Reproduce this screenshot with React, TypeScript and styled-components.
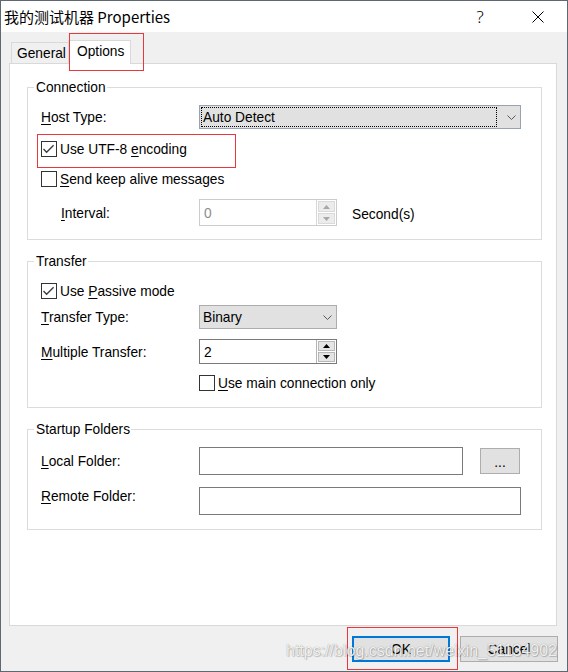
import React from "react";
import styled, { createGlobalStyle } from "styled-components";

const Global = createGlobalStyle`
  html, body { margin: 0; padding: 0; background: #2b3a48; }
  * { box-sizing: border-box; }
`;

const Window = styled.div`
  position: relative;
  width: 568px;
  height: 672px;
  border: 1px solid #5e6873;
  display: flex;
  flex-direction: column;
  background: #f0f0f0;
  font-family: "Liberation Sans", Arial, sans-serif;
  font-size: 13.75px;
  color: #000;
  overflow: hidden;
`;

const TitleBar = styled.div`
  height: 31px;
  flex: none;
  background: #fff;
  display: flex;
  align-items: center;
`;

const Title = styled.div`
  flex: 1;
  padding-left: 3px;
  font-family: "Noto Sans CJK SC", "Noto Sans", sans-serif;
  font-size: 15px;
  line-height: 31px;
  white-space: nowrap;
`;

const CaptionButton = styled.div`
  width: 58px;
  height: 31px;
  display: flex;
  align-items: center;
  justify-content: center;
  font-family: "Noto Sans", sans-serif;
  font-size: 17px;
  font-weight: 300;
`;

const Content = styled.div`
  padding: 8px 10px 0 8px;
  display: flex;
  flex-direction: column;
`;

const TabStrip = styled.div`
  height: 23px;
  display: flex;
  align-items: flex-end;
  padding-left: 2px;
`;

const Tab = styled.div<{ $active?: boolean; $w: number; $pl: number }>`
  width: ${(p) => p.$w}px;
  height: ${(p) => (p.$active ? 24 : 21)}px;
  padding: 3px 0 0 ${(p) => p.$pl}px;
  line-height: 16px;
  border: 1px solid #d9d9d9;
  border-bottom: none;
  background: ${(p) => (p.$active ? "#fff" : "#f0f0f0")};
  white-space: nowrap;
`;

const Annotated = styled.div<{
  $t: number;
  $l: number;
  $w: number;
  $h: number;
  $mt?: number;
  $ml?: number;
  $mb?: number;
}>`
  position: relative;
  z-index: 2;
  margin: ${(p) => `${p.$mt ?? 0}px 0 ${p.$mb ?? 0}px ${p.$ml ?? 0}px`};
  &::after {
    content: "";
    position: absolute;
    top: ${(p) => p.$t}px;
    left: ${(p) => p.$l}px;
    width: ${(p) => p.$w}px;
    height: ${(p) => p.$h}px;
    border: 1px solid #e8383d;
    pointer-events: none;
    z-index: 5;
  }
`;

const Panel = styled.div`
  height: 563px;
  border: 1px solid #d9d9d9;
  background: #fff;
  padding: 15px 14px 0 17px;
  display: flex;
  flex-direction: column;
`;

const Group = styled.fieldset<{ $pb: number }>`
  margin: 0 0 13px;
  padding: 0 0 ${(p) => p.$pb}px 13px;
  border: 1px solid #dcdcdc;
  min-width: 0;
  display: flex;
  flex-direction: column;
`;

const Legend = styled.legend`
  padding: 0 1px 0 2px;
  margin-left: -7px;
  line-height: 17px;
`;

const FormRow = styled.div<{ $mt: number; $h: number }>`
  display: flex;
  align-items: center;
  height: ${(p) => p.$h}px;
  margin-top: ${(p) => p.$mt}px;
`;

const Label = styled.span<{ $indent?: number; $top?: boolean }>`
  width: 158px;
  flex: none;
  padding: 2px 0 0 ${(p) => p.$indent ?? 0}px;
  line-height: 16px;
  white-space: nowrap;
  align-self: ${(p) => (p.$top ? "flex-start" : "auto")};
`;

const Key = styled.u`
  text-decoration-thickness: 1px;
  text-underline-offset: 2px;
`;

const CheckRow = styled.label<{ $mt?: number; $indent?: number }>`
  display: flex;
  align-items: center;
  height: 16px;
  margin-top: ${(p) => p.$mt ?? 0}px;
  margin-left: ${(p) => p.$indent ?? 0}px;
  white-space: nowrap;
`;

const CheckText = styled.span`
  line-height: 16px;
  padding-top: 2px;
`;

const Box = styled.span`
  width: 16px;
  height: 16px;
  flex: none;
  border: 1px solid #333;
  background: #fff;
  display: flex;
  align-items: center;
  justify-content: center;
  margin-right: 3px;
`;

const Combo = styled.div<{ $w: number; $focused?: boolean }>`
  width: ${(p) => p.$w}px;
  height: 24px;
  display: flex;
  background: #e1e1e1;
  border: 1px solid ${(p) => (p.$focused ? "#96a3b3" : "#adadad")};
`;

const ComboValue = styled.div<{ $focused?: boolean }>`
  flex: 1;
  margin: 1px 0 1px 1px;
  border: 1px dotted ${(p) => (p.$focused ? "#000" : "transparent")};
  padding: 2px 0 0 1px;
  display: flex;
  align-items: center;
  line-height: 16px;
`;

const ChevronArea = styled.div`
  width: 23px;
  flex: none;
  display: flex;
  align-items: center;
  justify-content: flex-end;
  padding-right: 4px;
`;

const SpinBox = styled.div<{ $w: number; $h: number; $disabled?: boolean }>`
  width: ${(p) => p.$w}px;
  height: ${(p) => p.$h}px;
  display: flex;
  background: #fff;
  border: 1px solid ${(p) => (p.$disabled ? "#cccccc" : "#7a7a7a")};
`;

const SpinText = styled.div<{ $disabled?: boolean }>`
  flex: 1;
  padding: 2px 0 0 4px;
  display: flex;
  align-items: center;
  line-height: 16px;
  color: ${(p) => (p.$disabled ? "#8d8d8d" : "#000")};
`;

const SpinButtons = styled.div<{ $disabled?: boolean }>`
  width: 20px;
  flex: none;
  display: flex;
  flex-direction: column;
  gap: 1px;
  padding: 1px 0;
  border-left: 1px solid ${(p) => (p.$disabled ? "#d8d8d8" : "#b5b5b5")};
`;

const SpinButton = styled.div<{ $disabled?: boolean }>`
  flex: 1;
  margin: 0 1px;
  background: ${(p) => (p.$disabled ? "#ececec" : "#e5e5e5")};
  border: 1px solid ${(p) => (p.$disabled ? "#dadada" : "#b8b8b8")};
  display: flex;
  align-items: center;
  justify-content: center;
`;

const Unit = styled.span`
  margin-left: 15px;
  padding-top: 4px;
  line-height: 16px;
`;

const TextBox = styled.div<{ $w: number }>`
  width: ${(p) => p.$w}px;
  height: 28px;
  border: 1px solid #7a7a7a;
  background: #fff;
`;

const SmallButton = styled.div`
  width: 40px;
  height: 26px;
  margin-left: 17px;
  background: #e1e1e1;
  border: 1px solid #adadad;
  display: flex;
  align-items: center;
  justify-content: center;
  padding-top: 3px;
  line-height: 16px;
`;

const Footer = styled.div`
  display: flex;
  justify-content: flex-end;
  gap: 10px;
  padding: 10px 9px 0 0;
`;

const DialogButton = styled.div<{ $default?: boolean }>`
  width: 98px;
  height: 26px;
  background: #e1e1e1;
  border: ${(p) => (p.$default ? "2px solid #0078d7" : "1px solid #adadad")};
  display: flex;
  align-items: center;
  justify-content: center;
  padding-top: 2px;
  line-height: 16px;
`;

const Watermark = styled.div`
  position: absolute;
  left: 285px;
  top: 641px;
  font-family: "Liberation Sans", Arial, sans-serif;
  font-size: 16px;
  line-height: 18px;
  color: rgba(255, 255, 255, 0.88);
  text-shadow: 0 0 1px rgba(60, 60, 60, 0.55), 1px 1px 1px rgba(0, 0, 0, 0.18);
  white-space: nowrap;
  pointer-events: none;
  z-index: 10;
`;

const Check = () => (
  <svg width="14" height="14" viewBox="0 0 14 14">
    <polyline points="1.5,7 4.6,10.2 11.6,3.2" fill="none" stroke="#3a3a3a" strokeWidth="1.3" />
  </svg>
);

const Chevron = () => (
  <svg width="9" height="5" viewBox="0 0 9 5">
    <polyline points="0.5,0.5 4.5,4.5 8.5,0.5" fill="none" stroke="#5a5a5a" strokeWidth="1" />
  </svg>
);

const Arrow = ({ up, disabled }: { up?: boolean; disabled?: boolean }) => (
  <svg width="7" height="4" viewBox="0 0 7 4">
    <polygon points={up ? "0,4 7,4 3.5,0" : "0,0 7,0 3.5,4"} fill={disabled ? "#a8a8a8" : "#000"} />
  </svg>
);

const CloseIcon = () => (
  <svg width="12" height="12" viewBox="0 0 12 12">
    <path d="M0.5 0.5 L11.5 11.5 M11.5 0.5 L0.5 11.5" stroke="#000" strokeWidth="1" />
  </svg>
);

const CheckBox = ({ checked }: { checked?: boolean }) => <Box>{checked && <Check />}</Box>;

const Spin = ({ value, w, h, disabled }: { value: string; w: number; h: number; disabled?: boolean }) => (
  <SpinBox $w={w} $h={h} $disabled={disabled}>
    <SpinText $disabled={disabled}>{value}</SpinText>
    <SpinButtons $disabled={disabled}>
      <SpinButton $disabled={disabled}>
        <Arrow up disabled={disabled} />
      </SpinButton>
      <SpinButton $disabled={disabled}>
        <Arrow disabled={disabled} />
      </SpinButton>
    </SpinButtons>
  </SpinBox>
);

export default function App() {
  return (
    <>
      <Global />
      <Window>
        <TitleBar>
          <Title>我的测试机器 Properties</Title>
          <CaptionButton>?</CaptionButton>
          <CaptionButton>
            <CloseIcon />
          </CaptionButton>
        </TitleBar>
        <Content>
          <TabStrip>
            <Tab $w={58} $pl={5}>General</Tab>
            <Annotated $t={-7} $l={1} $w={73} $h={36} $ml={-1} $mb={-1}>
              <Tab $active $w={63} $pl={8}>Options</Tab>
            </Annotated>
          </TabStrip>
          <Panel>
            <Group $pb={13}>
              <Legend>Connection</Legend>
              <FormRow $mt={9} $h={24}>
                <Label>
                  <Key>H</Key>ost Type:
                </Label>
                <Combo $w={322} $focused>
                  <ComboValue $focused>Auto Detect</ComboValue>
                  <ChevronArea>
                    <Chevron />
                  </ChevronArea>
                </Combo>
              </FormRow>
              <Annotated $t={-7} $l={-4} $w={197} $h={32} $mt={12}>
                <CheckRow>
                  <CheckBox checked />
                  <CheckText>
                    Use UTF-8 <Key>e</Key>ncoding
                  </CheckText>
                </CheckRow>
              </Annotated>
              <CheckRow $mt={14}>
                <CheckBox />
                <CheckText>
                  <Key>S</Key>end keep alive messages
                </CheckText>
              </CheckRow>
              <FormRow $mt={12} $h={27}>
                <Label $indent={20}>
                  <Key>I</Key>nterval:
                </Label>
                <Spin value="0" w={138} h={27} disabled />
                <Unit>Second(s)</Unit>
              </FormRow>
            </Group>

            <Group $pb={16}>
              <Legend>Transfer</Legend>
              <CheckRow $mt={13}>
                <CheckBox checked />
                <CheckText>
                  Use <Key>P</Key>assive mode
                </CheckText>
              </CheckRow>
              <FormRow $mt={6} $h={24}>
                <Label>
                  <Key>T</Key>ransfer Type:
                </Label>
                <Combo $w={138}>
                  <ComboValue>Binary</ComboValue>
                  <ChevronArea>
                    <Chevron />
                  </ChevronArea>
                </Combo>
              </FormRow>
              <FormRow $mt={10} $h={25}>
                <Label>
                  <Key>M</Key>ultiple Transfer:
                </Label>
                <Spin value="2" w={138} h={25} />
              </FormRow>
              <CheckRow $mt={11} $indent={158}>
                <CheckBox />
                <CheckText>
                  <Key>U</Key>se main connection only
                </CheckText>
              </CheckRow>
            </Group>

            <Group $pb={14}>
              <Legend>Startup Folders</Legend>
              <FormRow $mt={9} $h={28}>
                <Label>
                  <Key>L</Key>ocal Folder:
                </Label>
                <TextBox $w={264} />
                <SmallButton>...</SmallButton>
              </FormRow>
              <FormRow $mt={12} $h={28}>
                <Label $top>
                  <Key>R</Key>emote Folder:
                </Label>
                <TextBox $w={322} />
              </FormRow>
            </Group>
          </Panel>
        </Content>
        <Footer>
          <Annotated $t={-9} $l={-5} $w={109} $h={41}>
            <DialogButton $default>OK</DialogButton>
          </Annotated>
          <DialogButton>Cancel</DialogButton>
        </Footer>
        <Watermark>https://blog.csdn.net/weixin_51134902</Watermark>
      </Window>
    </>
  );
}
